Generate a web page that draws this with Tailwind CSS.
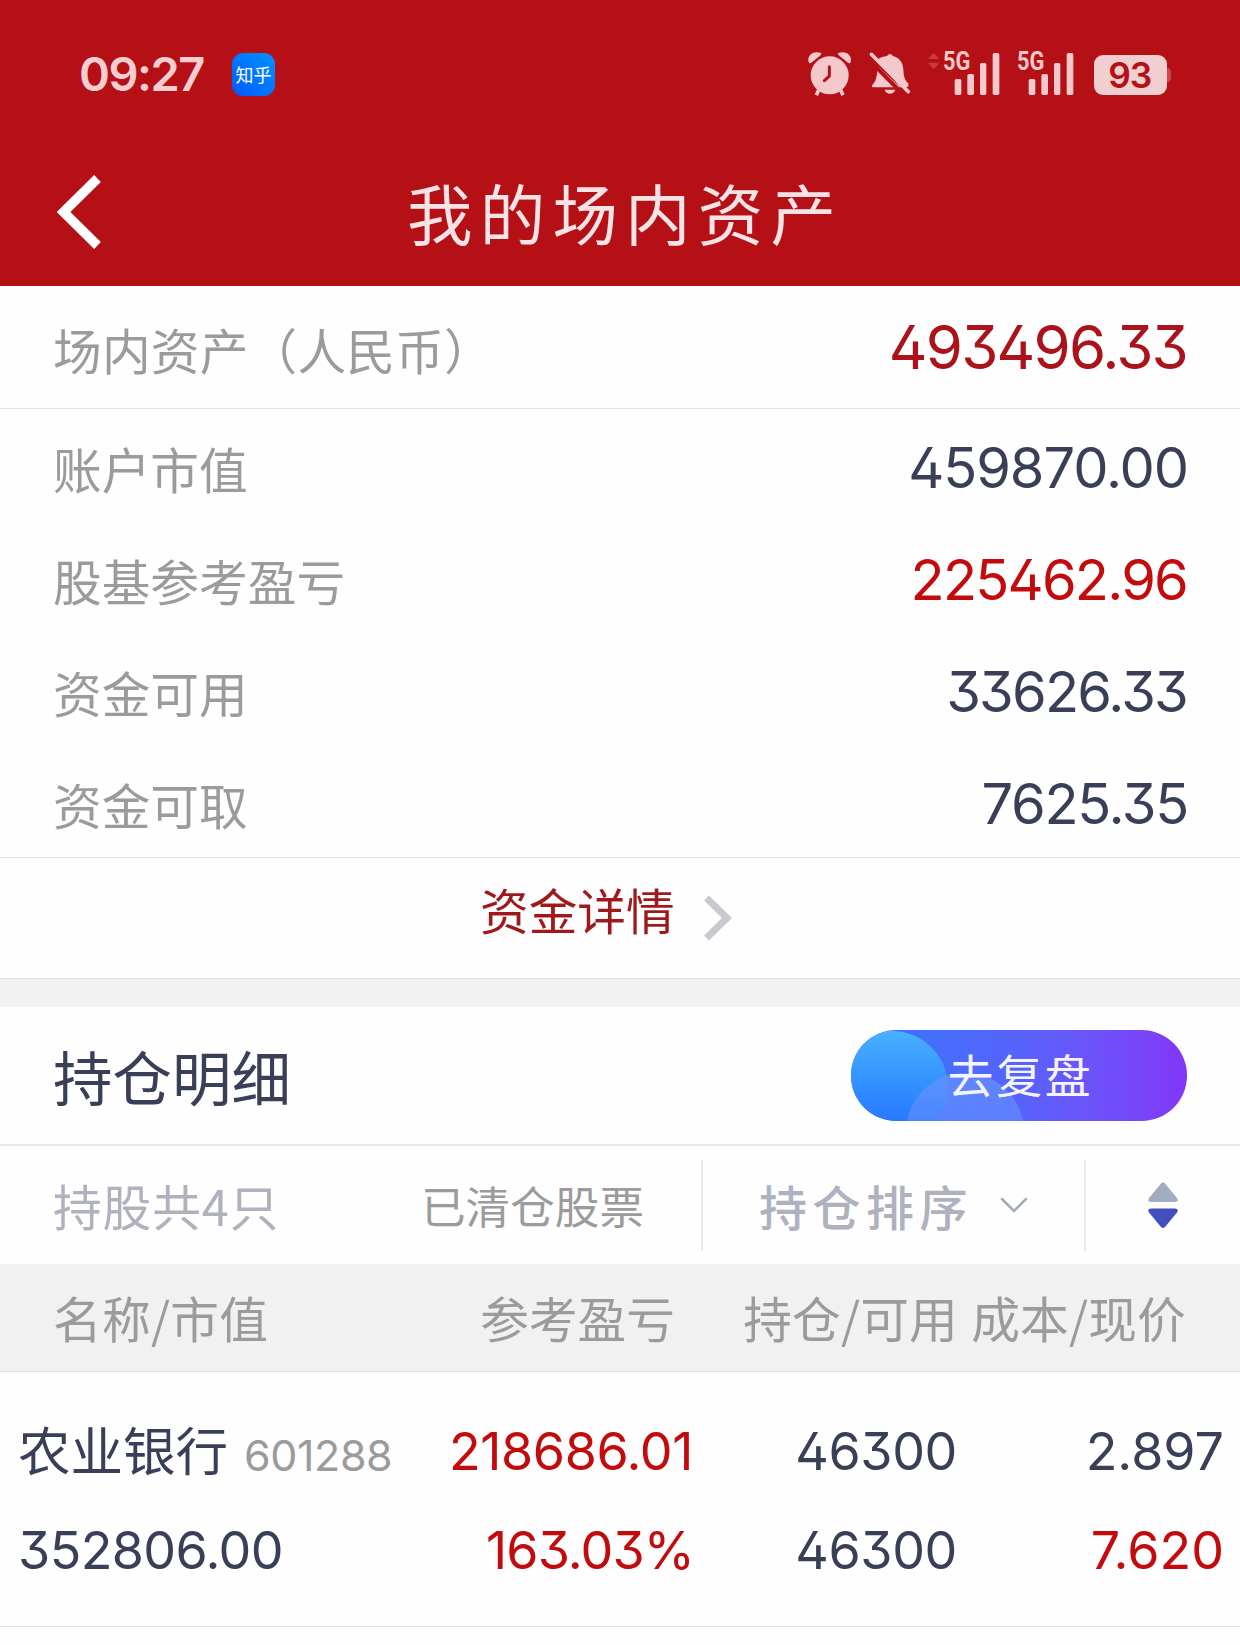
<!DOCTYPE html>
<html lang="zh-CN">
<head>
  <meta charset="UTF-8" />
  <meta name="viewport" content="width=device-width, initial-scale=1.0" />
  <title>我的场内资产</title>
  <script src="https://cdn.jsdelivr.net/npm/@tailwindcss/browser@4"></script>
</head>
<body class="w-[1240px] h-[1645px] overflow-hidden bg-[#fefefe] text-[#393f56] font-['Noto_Sans_CJK_SC',sans-serif] text-[48.7px] leading-none whitespace-nowrap">

  <header class="h-[286px] bg-[#b41016]">
    <!-- Status bar -->
    <div class="h-[150px] pl-[79px] pr-[50px] flex items-center justify-between">
      <div class="flex items-center gap-[28px]">
        <span class="pb-[4px] font-['Inter',sans-serif] font-semibold text-[47px] tracking-[-1.500px] text-[#f8cdd0]">09:27</span>
        <span class="mb-[2px] w-[43px] h-[43px] rounded-[11px] bg-linear-to-tr from-[#0058ff] to-[#0090ff] text-white text-[18px] flex items-center justify-center">知乎</span>
      </div>
      <svg class="w-[400px] h-[90px]" viewBox="0 0 1200 270" fill="#f5c9cc">
        <g id="alarm">
          <circle cx="119" cy="136" r="57" />
          <path d="M57 98C48 78 70 60 93 69C96 71 92 75 90 77L66 97C62 100 58 101 57 98ZM181 98C190 78 168 60 145 69C142 71 146 75 148 77L172 97C176 100 180 101 181 98Z" />
          <path d="M86 180L79 196M152 180L159 196" stroke="#f5c9cc" stroke-width="11" />
          <path d="M118 110V138L103 152" fill="none" stroke="#b41016" stroke-width="9" stroke-linecap="round" />
        </g>
        <g id="muted">
          <path d="M263 108L330 172H248C244 170 246 166 249 163C259 150 261 140 263 108ZM265 87C275 80 286 79 292 78C292 71 308 71 308 78C328 82 339 98 340 118C341 142 345 152 355 160V170L330 172ZM284 179H316C312 195 288 195 284 179Z" />
          <path d="M256 95L348 188" stroke="#b41016" stroke-width="12" transform="translate(-8 6)" />
          <path d="M244 73L355 185" stroke="#f5c9cc" stroke-width="11" stroke-linecap="round" />
        </g>
        <path d="M414 87L431 68L448 87ZM414 98L431 118L448 98Z" fill="#c93b43" />
        <g id="signals">
          <text x="459" y="121" font-family="Roboto" font-weight="700" font-size="76" textLength="82" lengthAdjust="spacingAndGlyphs">5G</text>
          <rect x="494" y="147" width="20" height="48" rx="5" />
          <rect x="532" y="132" width="20" height="63" rx="5" />
          <rect x="570" y="99" width="19" height="96" rx="5" />
          <rect x="608" y="69" width="20" height="126" rx="5" />
          <text x="681" y="121" font-family="Roboto" font-weight="700" font-size="76" textLength="82" lengthAdjust="spacingAndGlyphs">5G</text>
          <rect x="716" y="147" width="20" height="48" rx="5" />
          <rect x="754" y="132" width="20" height="63" rx="5" />
          <rect x="792" y="99" width="19" height="96" rx="5" />
          <rect x="830" y="69" width="20" height="126" rx="5" />
        </g>
        <g id="battery">
          <path d="M1131 114C1147 114 1143 135 1143 135S1147 157 1131 157Z" fill="#c9494f" />
          <rect x="912" y="75" width="219" height="120" rx="27" fill="#f1ced0" />
          <text x="955" y="173" font-family="Inter" font-weight="600" font-size="106" textLength="132" fill="#b41016">93</text>
        </g>
      </svg>
    </div>

    <!-- Title bar -->
    <div class="h-[124px] pl-[56px] flex items-center">
      <svg class="w-[46px] h-[74px]" viewBox="0 0 46 74" fill="none" stroke="#fff" stroke-width="9.5">
        <path d="M41.500 3.500L7.500 37L41.500 70.500" />
      </svg>
      <h1 class="ml-[305px] text-[65.500px] tracking-[7.200px] text-[#f6e3e5]">我的场内资产</h1>
    </div>
  </header>

  <!-- Assets summary -->
  <section class="text-[#9b9b9b]">
    <div class="h-[123px] pl-[53px] pr-[53px] flex items-center justify-between border-b border-[#e3e3e3]">
      <span class="pt-[4px] tracking-[0.200px]">场内资产（人民币）</span>
      <span class="font-['Inter',sans-serif] text-[60px] tracking-[-1.800px] [font-feature-settings:'cv02','cv09'] text-[#ab1219]">493496.33</span>
    </div>
    <div class="h-[449px] border-b border-[#e3e3e3]">
      <div class="h-[112px] pt-[5px] px-[53px] flex items-center justify-between">
        <span class="pt-[2px]">账户市值</span>
        <span class="-mr-[1px] font-['Inter',sans-serif] text-[56px] tracking-[-1.100px] [font-feature-settings:'cv02','cv09'] text-[#393f56]">459870.00</span>
      </div>
      <div class="h-[112px] pt-[5px] px-[53px] flex items-center justify-between">
        <span class="pt-[2px]">股基参考盈亏</span>
        <span class="font-['Inter',sans-serif] text-[56px] tracking-[-1.800px] [font-feature-settings:'cv02','cv09'] text-[#c30a0d]">225462.96</span>
      </div>
      <div class="h-[112px] pt-[5px] px-[53px] flex items-center justify-between">
        <span class="pt-[2px]">资金可用</span>
        <span class="font-['Inter',sans-serif] text-[56px] tracking-[-1.800px] [font-feature-settings:'cv02','cv09'] text-[#393f56]">33626.33</span>
      </div>
      <div class="h-[112px] pt-[5px] px-[53px] flex items-center justify-between">
        <span class="pt-[2px]">资金可取</span>
        <span class="-mr-[1px] font-['Inter',sans-serif] text-[56px] tracking-[-1.300px] [font-feature-settings:'cv02','cv09'] text-[#393f56]">7625.35</span>
      </div>
    </div>
    <a href="#" class="h-[121px] pl-[480px] flex items-center border-b border-[#e3e3e3] text-[#9f181c]">
      <span class="pb-[17px]">资金详情</span>
      <svg class="ml-[28px] w-[30px] h-[46px]" viewBox="0 0 30 46" fill="none" stroke="#c8c8cf" stroke-width="7">
        <path d="M3.500 3L24 23L3.500 43" />
      </svg>
    </a>
  </section>

  <div class="h-[28px] bg-[#f1f1f1]"></div>

  <!-- Holdings title -->
  <div class="h-[139px] pl-[53px] pr-[53px] flex items-center justify-between border-b-2 border-[#e6ebee]">
    <h2 class="text-[59.500px] pt-[1px]">持仓明细</h2>
    <button class="relative w-[336px] h-[91px] rounded-full overflow-hidden bg-linear-to-r from-[#2d78ff] via-[#5663fb] to-[#8136f8]">
      <span class="absolute left-[-15px] top-[1px] w-[112px] h-[112px] rounded-full bg-linear-to-b from-[#49b0ff] to-[#2469ff]"></span>
      <span class="absolute left-[55px] top-[43px] w-[118px] h-[118px] rounded-full bg-linear-to-b from-[#6a92ff]/70 to-[#4c86ff]/50"></span>
      <span class="relative block pl-[3px] pb-[6px] text-[46px] tracking-[2.700px] text-[#f4f3ff]">去复盘</span>
    </button>
  </div>

  <!-- Filter bar -->
  <div class="h-[118px] flex items-center text-[#afb2be]">
    <span class="w-[369px] pl-[53px] pt-[1px] tracking-[0.900px]">持股共4只</span>
    <span class="w-[332px] pl-[52px] pt-[1px] text-[44.600px] text-[#9b9b9b]">已清仓股票</span>
    <div class="w-[383px] h-[91px] pl-[56px] border-l-2 border-[#e6ebee] flex items-center">
      <span class="font-medium text-[48px] tracking-[5.500px]">持仓排序</span>
      <svg class="ml-[27px] w-[28px] h-[16px]" viewBox="0 0 28 16" fill="none" stroke="#a2abbd" stroke-width="2.500" stroke-linecap="round">
        <path d="M2 2L14 14L26 2" />
      </svg>
    </div>
    <div class="w-[156px] h-[91px] border-l-2 border-[#e6ebee] flex items-center justify-center">
      <svg class="w-[30px] h-[48px]" viewBox="0 0 30 48">
        <path d="M13 2.500Q15 0.500 17 2.500L29 17Q31 21 27 21H3Q-1 21 1 17Z" fill="#a2abbf" />
        <path d="M13 46Q15 48 17 46L29 31.500Q31 27.500 27 27.500H3Q-1 27.500 1 31.500Z" fill="#434fbe" />
      </svg>
    </div>
  </div>

  <!-- Holdings table -->
  <div class="h-[108px] pl-[53px] flex items-center bg-[#f1f1f1] border-b border-[#e1e1e1] text-[#9b9b9b]">
    <span class="w-[350px] tracking-[0.300px]">名称/市值</span>
    <span class="w-[272px] text-right">参考盈亏</span>
    <span class="w-[283px] text-right tracking-[0.200px]">持仓/可用</span>
    <span class="w-[228px] text-right tracking-[0.200px]">成本/现价</span>
  </div>
  <div class="h-[255px] pt-[30px] border-b border-[#e3e3e3] font-['Inter','Noto_Sans_CJK_SC',sans-serif] text-[52px] tracking-[-0.400px] [font-feature-settings:'cv02','cv09']">
    <div class="h-[99px] pl-[18px] flex items-center">
      <div class="w-[402px] pb-[4px] flex items-baseline">
        <span class="font-['Noto_Sans_CJK_SC',sans-serif] text-[52.500px] tracking-normal">农业银行</span>
        <span class="ml-[16px] text-[43px] text-[#9b9b9b]">601288</span>
      </div>
      <span class="w-[273px] text-right text-[#c30a0d]">218686.01</span>
      <span class="w-[264px] text-right">46300</span>
      <span class="w-[267px] text-right tracking-normal">2.897</span>
    </div>
    <div class="h-[99px] pl-[18px] flex items-center">
      <span class="w-[402px] tracking-[-0.600px]">352806.00</span>
      <span class="w-[274px] text-right tracking-[-0.900px] text-[#c30a0d]">163.03%</span>
      <span class="w-[263px] text-right">46300</span>
      <span class="w-[267px] text-right tracking-normal text-[#c30a0d]">7.620</span>
    </div>
  </div>

</body>
</html>
